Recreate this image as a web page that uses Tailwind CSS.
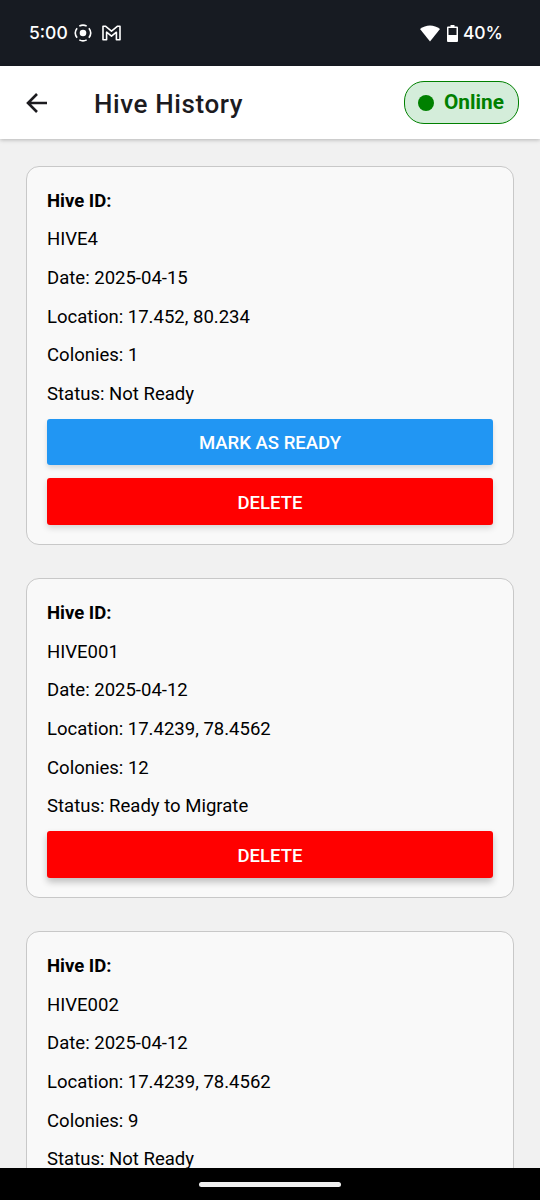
<!DOCTYPE html>
<html lang="en">
<head>
<meta charset="utf-8">
<title>Hive History</title>
<script src="https://cdn.jsdelivr.net/npm/@tailwindcss/browser@4"></script>
</head>
<body class="bg-[#f1f1f1] font-['Roboto',sans-serif] text-black">
<div class="flex h-[1200px] w-[540px] flex-col overflow-hidden">
  <!-- Status bar -->
  <div class="flex h-[66px] shrink-0 items-center bg-[#171b22] pr-[38px] pl-[29px] text-white">
    <span class="w-[40px] text-[17.5px] font-medium whitespace-nowrap font-['Inter',sans-serif]">5:00</span>
    <svg class="ml-[5px] size-[18px]" viewBox="0 0 18 18" fill="none" stroke="#fff" stroke-width="1.6"><circle cx="9" cy="9" r="3.3" fill="#fff" stroke="none"/><path d="M5.3 2.1A7.6 7.6 0 0 1 12.7 2.1M14.9 4.3A7.6 7.6 0 0 1 14.9 13.7M12.7 15.9A7.6 7.6 0 0 1 5.3 15.9M3.1 13.7A7.6 7.6 0 0 1 3.1 4.3"/></svg>
    <svg class="ml-[10px] h-[16px] w-[19px]" viewBox="0 0 19 16" fill="none" stroke="#fff" stroke-width="1.6" stroke-linejoin="round"><path d="M1 14.8V1.2H3.4L9.5 6.2L15.6 1.2H18V14.8H14.4V7.2L9.5 11.2L4.6 7.2V14.8Z"/></svg>
    <div class="ml-auto flex items-center">
      <svg class="h-[17px] w-[20px]" viewBox="0 0 20 17" fill="#fff"><path d="M0 4C5.8-.7 14.2-.7 20 4L10 16.5Z"/></svg>
      <svg class="mr-[5px] ml-[7px] h-[17px] w-[11px]" viewBox="0 0 11 17" fill="#fff"><path fill-rule="evenodd" d="M3.5 0H7.5V1.5H10Q11 1.5 11 2.5V16Q11 17 10 17H1Q0 17 0 16V2.5Q0 1.5 1 1.5H3.5ZM1.5 3V10H9.5V3Z"/></svg>
      <span class="w-[39px] text-[17.5px] font-medium tracking-[-0.2px] whitespace-nowrap font-['Inter',sans-serif]">40%</span>
    </div>
  </div>
  <!-- App bar -->
  <header class="z-10 flex h-[73px] shrink-0 items-center bg-white pr-[21px] pl-[26px] shadow-[0_1px_4px_rgba(0,0,0,0.25)]">
    <svg class="h-[20px] w-[21px]" viewBox="0 0 21 20" fill="none" stroke="#1c1b1f" stroke-width="2.6"><path d="M21 10H2M11 1L2 10L11 19"/></svg>
    <h1 class="ml-[47px] pt-[3px] text-[26px] font-medium tracking-[0.6px] text-[#1c1b1f]">Hive History</h1>
    <div class="ml-auto flex h-[43px] w-[115px] items-center rounded-[20px] border border-[#008000] bg-[#d4edda] pl-[13px] text-[#008000]">
      <span class="size-[16px] rounded-full bg-[#008000]"></span>
      <span class="ml-[10px] pt-px text-[20.8px] font-bold">Online</span>
    </div>
  </header>
  <!-- Hive list -->
  <main class="flex min-h-0 flex-1 flex-col gap-[33.5px] overflow-hidden px-[26px] pt-[27px] text-[18.55px] leading-[38.65px]">
    <section class="shrink-0 rounded-[13px] border border-[#c8c8c8] bg-[#f9f9f9] px-[20px] pt-[14.8px] pb-[19px]">
      <p class="font-bold">Hive ID:</p>
      <p>HIVE4</p>
      <p>Date: 2025-04-15</p>
      <p>Location: 17.452, 80.234</p>
      <p>Colonies: 1</p>
      <p>Status: Not Ready</p>
      <button class="mt-[4.9px] block h-[46px] w-full rounded-[3px] bg-[#2196f3] pt-[3px] leading-none font-medium text-white shadow-[0_3px_5px_rgba(0,0,0,0.13)]">MARK AS READY</button>
      <button class="mt-[13px] block h-[47px] w-full rounded-[3px] bg-[#ff0000] pt-[4px] leading-none font-medium text-white shadow-[0_3px_6px_rgba(0,0,0,0.15)]">DELETE</button>
    </section>
    <section class="shrink-0 rounded-[13px] border border-[#c8c8c8] bg-[#f9f9f9] px-[20px] pt-[14.8px] pb-[19px]">
      <p class="font-bold">Hive ID:</p>
      <p>HIVE001</p>
      <p>Date: 2025-04-12</p>
      <p>Location: 17.4239, 78.4562</p>
      <p>Colonies: 12</p>
      <p>Status: Ready to Migrate</p>
      <button class="mt-[4.9px] block h-[47px] w-full rounded-[3px] bg-[#ff0000] pt-[4px] leading-none font-medium text-white shadow-[0_4px_7px_rgba(0,0,0,0.24)]">DELETE</button>
    </section>
    <section class="h-[380px] shrink-0 rounded-[13px] border border-[#c8c8c8] bg-[#f9f9f9] px-[20px] pt-[14.8px] pb-[19px]">
      <p class="font-bold">Hive ID:</p>
      <p>HIVE002</p>
      <p>Date: 2025-04-12</p>
      <p>Location: 17.4239, 78.4562</p>
      <p>Colonies: 9</p>
      <p>Status: Not Ready</p>
    </section>
  </main>
  <!-- Gesture bar -->
  <div class="flex h-[32px] shrink-0 items-center justify-center bg-black">
    <div class="h-[5px] w-[142px] rounded-full bg-[#f0f0f0]"></div>
  </div>
</div>
</body>
</html>
